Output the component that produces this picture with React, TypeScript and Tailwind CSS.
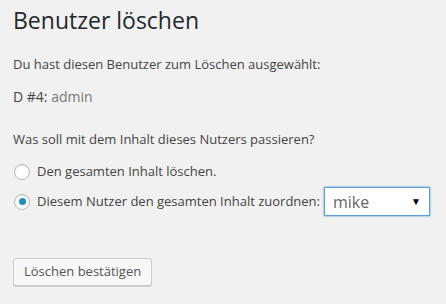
export default function App() {
  return (
    <div className="w-[446px] h-[304px] bg-[#f1f1f1] text-[#444] pl-[13px] pt-[6px] overflow-hidden" style={{ fontFamily: '"Open Sans", sans-serif' }}>
      <h1 className="text-[23px] leading-[29px] text-[#23282d] font-normal">Benutzer löschen</h1>
      <p className="text-[13px] leading-[19px] mt-[20px]">Du hast diesen Benutzer zum Löschen ausgewählt:</p>
      <p className="text-[14px] leading-[19px] mt-[13px]">
        <span>D #4: </span>
        <span className="text-[#777]">admin</span>
      </p>
      <p className="text-[13px] leading-[19px] mt-[24px]">Was soll mit dem Inhalt dieses Nutzers passieren?</p>
      <div className="mt-[13px] flex flex-col">
        <label className="flex items-center h-[19px] text-[13px]">
          <span className="w-4 h-4 rounded-full border border-[#b4b9be] bg-white shadow-[inset_0_1px_2px_rgba(0,0,0,0.1)] mr-[7px] ml-px" />
          Den gesamten Inhalt löschen.
        </label>
        <label className="flex items-center text-[13px] mt-[6px]">
          <span className="w-4 h-4 rounded-full border border-[#b4b9be] bg-white shadow-[inset_0_1px_2px_rgba(0,0,0,0.1)] mr-[7px] ml-px flex items-center justify-center">
            <span className="w-[7px] h-[7px] rounded-full bg-[#1e8cbe]" />
          </span>
          <span>Diesem Nutzer den gesamten Inhalt zuordnen:</span>
          <span className="ml-[4px] w-[106px] h-[29px] border border-[#5b9dd9] bg-white shadow-[0_0_2px_rgba(30,140,190,0.8)] flex items-center justify-between pl-[8px] pr-[8px]">
            <span className="text-[16px] text-[#666]">mike</span>
            <span className="text-[10px] text-black">▼</span>
          </span>
        </label>
      </div>
      <button className="mt-[42px] h-[28px] px-[10px] text-[13px] text-[#555] bg-[#f7f7f7] border border-[#ccc] rounded-[3px] shadow-[0_1px_0_#ccc]">
        Löschen bestätigen
      </button>
    </div>
  );
}
